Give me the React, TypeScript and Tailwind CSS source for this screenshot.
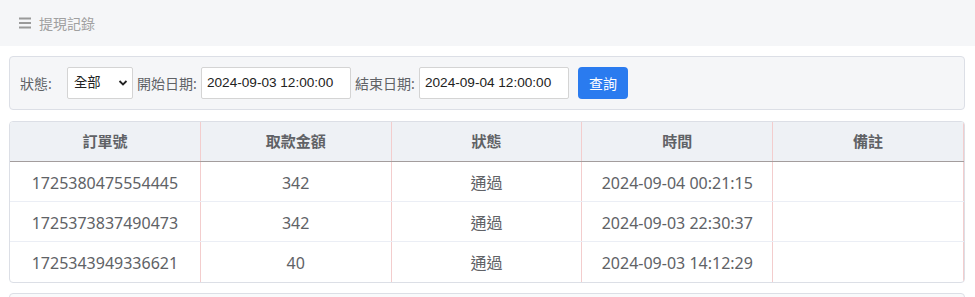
import React from "react";

const rows = [
  ["1725380475554445", "342", "通過", "2024-09-04 00:21:15", ""],
  ["1725373837490473", "342", "通過", "2024-09-03 22:30:37", ""],
  ["1725343949336621", "40", "通過", "2024-09-03 14:12:29", ""],
];

const heads = ["訂單號", "取款金額", "狀態", "時間", "備註"];

export default function App() {
  return (
    <div
      className="w-[975px] h-[297px] overflow-hidden bg-white"
      style={{ fontFamily: '"Microsoft YaHei", "Noto Sans", "Noto Sans CJK TC", sans-serif' }}
    >
      <div className="h-[46px] bg-[#f5f6f8] flex items-center pl-[19px]">
        <svg width="12" height="12" viewBox="0 0 12 12" className="mr-[8px]">
          <rect x="0" y="0.5" width="12" height="2" fill="#9a9a9a" />
          <rect x="0" y="5" width="12" height="2" fill="#9a9a9a" />
          <rect x="0" y="9.5" width="12" height="2" fill="#9a9a9a" />
        </svg>
        <span className="text-[14px] text-[#a0a0a0]">提現記錄</span>
      </div>

      <div className="ml-[9px] mr-[10px] mt-[10px] h-[54px] bg-[#f5f6f8] border border-[#dcdfe6] rounded-[4px] flex items-center px-[10px] text-[14px] text-[#606266]">
        <span className="w-[47px] shrink-0">狀態:</span>
        <div className="w-[66px] h-[32px] bg-white border border-[#d4d4d4] rounded-[2px] flex items-center justify-between pl-[6px] pr-[4px] text-[13.33px] text-[#222]">
          <span>全部</span>
          <svg width="10" height="8" viewBox="0 0 10 8">
            <path d="M1.5 2 L5 5.5 L8.5 2" stroke="#222" strokeWidth="1.8" fill="none" />
          </svg>
        </div>
        <span className="ml-[4px] w-[64px] shrink-0">開始日期:</span>
        <div className="w-[150px] h-[32px] bg-white border border-[#d4d4d4] rounded-[2px] flex items-center px-[5px] text-[13.6px] text-[#222]" style={{ fontFamily: '"Liberation Sans", Arial, sans-serif' }}>
          2024-09-03 12:00:00
        </div>
        <span className="ml-[4px] w-[64px] shrink-0">結束日期:</span>
        <div className="w-[150px] h-[32px] bg-white border border-[#d4d4d4] rounded-[2px] flex items-center px-[5px] text-[13.6px] text-[#222]" style={{ fontFamily: '"Liberation Sans", Arial, sans-serif' }}>
          2024-09-04 12:00:00
        </div>
        <button className="ml-[9px] w-[50px] h-[32px] bg-[#2a7bef] rounded-[4px] text-white text-[14px] flex items-center justify-center">
          查詢
        </button>
      </div>

      <div className="ml-[9px] mr-[10px] mt-[11px] border border-[#dcdfe6] rounded-[4px] overflow-hidden">
        <div className="grid grid-cols-5 h-[40px] bg-[#eef1f5] border-b border-[#a39d9d]">
          {heads.map((h) => (
            <div key={h} className="border-r border-[#f3cdcd] flex items-center justify-center text-[15px] font-semibold text-[#606266]">
              {h}
            </div>
          ))}
        </div>
        {rows.map((r, i) => (
          <div key={i} className={`grid grid-cols-5 h-[40px] ${i < rows.length - 1 ? "border-b border-[#ebeef5]" : ""}`}>
            {r.map((c, j) => (
              <div key={j} className="border-r border-[#f3cdcd] flex items-center justify-center pt-[2px] text-[16px] text-[#606266]">
                {c}
              </div>
            ))}
          </div>
        ))}
      </div>

      <div className="ml-[9px] mr-[10px] mt-[10px] h-[40px] bg-[#f9fafb] border border-[#dcdfe6] rounded-[4px]" />
    </div>
  );
}
